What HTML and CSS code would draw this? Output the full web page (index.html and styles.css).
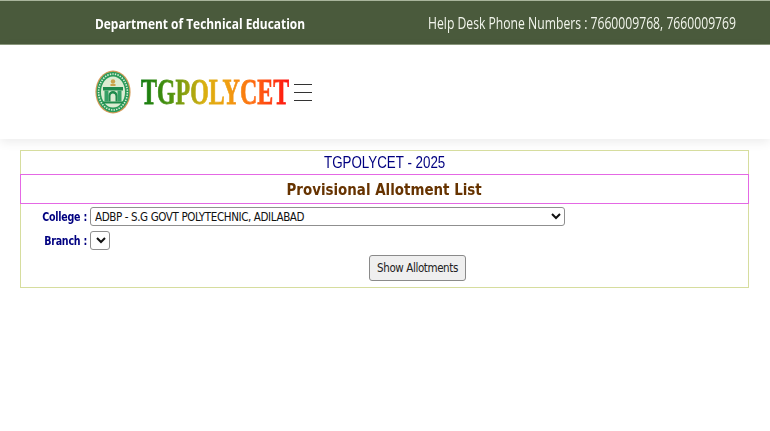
FILE: index.html
```html
<!DOCTYPE html>
<html lang="en">
<head>
<meta charset="UTF-8" />
<meta name="viewport" content="width=device-width, initial-scale=1" />
<title>TGPOLYCET - Provisional Allotment List</title>
<link rel="stylesheet" href="styles.css">
</head>
<body>

<div class="topbar">
  <div class="dept">Department of Technical Education</div>
  <div class="helpdesk">Help Desk Phone Numbers : 7660009768, 7660009769</div>
</div>

<header class="brand">
  <svg class="emblem" viewBox="0 0 36 44" width="36" height="44" aria-hidden="true">
    <ellipse cx="18" cy="22" rx="17.6" ry="21.4" fill="#d49a58" />
    <ellipse cx="18" cy="22" rx="16.4" ry="20.2" fill="#2a9a5a" />
    <ellipse cx="18" cy="22" rx="14.4" ry="18" fill="none" stroke="#d8efd8" stroke-width="1.6" stroke-dasharray="1.4 1.2" />
    <ellipse cx="18" cy="22" rx="12" ry="15.4" fill="#dcecd2" />
    <circle cx="18" cy="11.5" r="2.2" fill="#c9a24a" />
    <path d="M15.5 14h5v2h-5z" fill="#c9a24a" />
    <path d="M8 17h20v3.5H8z" fill="#1f8a4c" />
    <path d="M9.5 20.500h4v11h-4zM22.500 20.500h4v11h-4z" fill="#35a065" />
    <path d="M13.500 31.500v-6a4.500 4.500 0 0 1 9 0v6h-2v-5.500a2.500 2.500 0 0 0-5 0v5.500z" fill="#1f8a4c" />
    <path d="M8 31.500h20v2H8z" fill="#1f8a4c" />
  </svg>
  <div class="logo-box"><span class="logo-text">TGPOLYCET</span></div>
  <div class="menu-icon"><span></span><span></span><span></span></div>
</header>

<main class="panel">
  <div class="panel-title"><span class="squeezed">TGPOLYCET - 2025</span></div>
  <h1 class="panel-heading"><span class="squeezed">Provisional Allotment List</span></h1>
  <form class="filters">
    <label class="filter-label" for="college">College :</label>
    <select class="college-select" id="college">
      <option>ADBP - S.G GOVT POLYTECHNIC, ADILABAD</option>
    </select>
    <label class="filter-label" for="branch">Branch :</label>
    <select class="branch-select" id="branch"></select>
    <div class="actions">
      <button type="button" class="show-btn">Show Allotments</button>
    </div>
  </form>
</main>

</body>
</html>
```

FILE: styles.css
```css
/* Reset */
*, *::before, *::after {
  box-sizing: border-box;
}

body {
  margin: 0;
  background: #fff;
  color: #222;
  font-family: "Open Sans", "Liberation Sans", sans-serif;
}

/* Top bar */
.topbar {
  height: 45px;
  background: #4a5a3c;
  border-top: 1px solid #a9b59c;
  border-bottom: 1px solid #8c9a7e;
  color: #fff;
  display: flex;
  align-items: center;
  justify-content: space-between;
  padding: 0 33px 0 95px;
}

.dept {
  width: 212px;
  white-space: nowrap;
  font-size: 15px;
  font-weight: 700;
  transform: scaleX(0.795);
  transform-origin: left center;
}

.helpdesk {
  width: 309px;
  white-space: nowrap;
  font-size: 15.5px;
  color: #f2f5ec;
  transform: scaleX(0.785);
  transform-origin: left center;
}

/* Logo row */
.brand {
  height: 94px;
  display: flex;
  align-items: center;
  padding-left: 95px;
  box-shadow: 0 3px 10px rgba(0, 0, 0, 0.08);
}

.emblem {
  flex: none;
  margin-right: 10px;
}

.logo-box {
  width: 148px;
  height: 40px;
}

.logo-text {
  display: inline-block;
  font-family: "Liberation Serif", serif;
  font-size: 36px;
  line-height: 40px;
  font-weight: 700;
  transform: scaleX(0.665);
  transform-origin: left center;
  background: linear-gradient(90deg, #0f7a0f 0%, #4f930f 20%, #d8b010 42%, #f0a010 58%, #ff6a10 76%, #ff1010 100%);
  -webkit-background-clip: text;
  background-clip: text;
  color: transparent;
  -webkit-text-stroke: 0.8px transparent;
}

.menu-icon {
  width: 18px;
  margin-left: 5px;
  display: flex;
  flex-direction: column;
  gap: 7px;
}

.menu-icon span {
  height: 1px;
  background: #333;
}

/* Main panel */
.panel {
  margin: 11px 21px 0 20px;
  height: 138px;
  border: 1px solid #d6dd9e;
}

.panel-title {
  height: 23px;
  line-height: 24px;
  text-align: center;
  font-family: "Liberation Sans", sans-serif;
  font-size: 16px;
  color: #000080;
}

.panel-title .squeezed {
  transform: scaleX(0.835);
}

.panel-heading {
  margin: 0 -1px;
  height: 30px;
  line-height: 30px;
  border: 1px solid #e468e4;
  text-align: center;
  font-family: "DejaVu Sans", sans-serif;
  font-size: 15px;
  font-weight: 700;
  color: #663300;
}

.panel-heading .squeezed {
  transform: scaleX(0.895);
}

.squeezed {
  display: inline-block;
}

.filters {
  display: grid;
  grid-template-columns: 66px 1fr;
  column-gap: 3px;
  row-gap: 5px;
  padding-top: 3px;
}

.filter-label {
  align-self: center;
  text-align: right;
  font-family: "DejaVu Sans Condensed", "DejaVu Sans", sans-serif;
  font-size: 11.5px;
  font-weight: 700;
  letter-spacing: -0.25px;
  color: #000080;
  transform: scaleX(0.92);
  transform-origin: right center;
}

.college-select,
.branch-select {
  height: 19px;
  padding: 0;
  border: 1px solid #8f8f8f;
  border-radius: 3px;
  background: #fff;
  font-family: "DejaVu Sans Condensed", "DejaVu Sans", sans-serif;
  font-size: 11.5px;
  letter-spacing: -0.38px;
  color: #111;
}

.college-select {
  width: 475px;
}

.branch-select {
  width: 20px;
}

.actions {
  grid-column: 1 / -1;
  padding: 0 0 0 348px;
}

.show-btn {
  width: 97px;
  height: 26px;
  padding: 0;
  border: 1px solid #8a8a8a;
  border-radius: 3px;
  background: #efefef;
  font-family: "DejaVu Sans Condensed", "DejaVu Sans", sans-serif;
  font-size: 11.5px;
  letter-spacing: -0.4px;
  color: #222;
}
```
